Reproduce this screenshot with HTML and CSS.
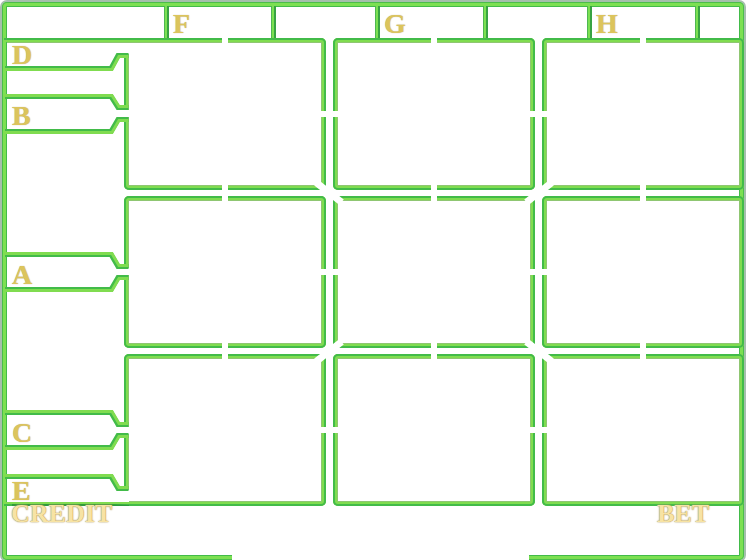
FILE: index.html
```html
<!DOCTYPE html>
<html lang="en">
<head>
<meta charset="utf-8">
<meta name="viewport" content="width=device-width, initial-scale=1">
<title>Reels</title>
<link rel="stylesheet" href="styles.css">
</head>
<body>
<main class="cabinet">
  <header class="top">
    <div class="slot"></div>
    <div class="slot divided letter">F</div>
    <div class="slot divided"></div>
    <div class="slot divided letter">G</div>
    <div class="slot divided"></div>
    <div class="slot divided letter">H</div>
    <div class="slot divided"></div>
  </header>
  <section class="field">
    <div class="rail">
      <svg class="pipes" viewBox="2 38 127 468" preserveAspectRatio="none" aria-hidden="true">
        <path class="clear" d="M124 42h5v12h-5zM124 490h5v12h-5z"/>
        <path class="clear" d="M124 110h5v7h-5zM124 268h5v7h-5zM124 427h5v7h-5z"/>
        <g class="edge">
          <path d="M5 68.5H111L118 55.5H128.5"/>
          <path d="M5 96.5H111L118 107.5H128.5"/>
          <path d="M5 131.5H111L118 119.5H128.5"/>
          <path d="M5 254.500H111L118 266.5H128.5"/>
          <path d="M5 289.5H111L118 277.5H128.5"/>
          <path d="M5 412.5H111L118 424.5H128.5"/>
          <path d="M5 447.5H111L118 435.5H128.5"/>
          <path d="M5 476.5H111L118 488.5H128.5"/>
        </g>
        <g class="shine">
          <path d="M4 69.5H112L119 56.5H128.5"/>
          <path d="M4 95.5H112L119 106.5H128.5"/>
          <path d="M4 132.5H112L119 120.5H128.5"/>
          <path d="M4 253.5H112L119 265.5H128.5"/>
          <path d="M4 290.5H112L119 278.5H128.5"/>
          <path d="M4 411.5H112L119 423.5H128.5"/>
          <path d="M4 448.5H112L119 436.5H128.5"/>
          <path d="M4 475.5H112L119 487.5H128.5"/>
        </g>
        <path class="dark" d="M4 38H129V40H4zM4 504H129V506H4z"/>
        <path class="light" d="M4 40H129V42H4zM4 502H129V504H4z"/>
        <path class="rim" d="M7 42H129V43H7z"/>
        <path class="shade" d="M12 504H110L129 505V506H12z"/>
      </svg>
      <span class="letter row-d">D</span>
      <span class="letter row-b">B</span>
      <span class="letter row-a">A</span>
      <span class="letter row-c">C</span>
      <span class="letter row-e">E</span>
    </div>
    <div class="reels">
      <div class="cell"></div>
      <div class="cell"></div>
      <div class="cell edge-right"></div>
      <div class="cell"></div>
      <div class="cell centre"><i class="cut nw"></i><i class="cut ne"></i><i class="cut sw"></i><i class="cut se"></i></div>
      <div class="cell edge-right"></div>
      <div class="cell edge-bottom"></div>
      <div class="cell edge-bottom"></div>
      <div class="cell edge-right edge-bottom"></div>
    </div>
  </section>
  <footer class="meters">
    <span class="meter">CREDIT</span>
    <span class="meter">BET</span>
  </footer>
</main>
</body>
</html>
```
FILE: styles.css
```css
:root {
  --dark: #42bb49;
  --light: #80dc50;
  --rim: #8fc672;
  --gold: #dcc45c;
  --cream: #f7e3a4;
}

* { box-sizing: border-box; }

body {
  margin: 0;
  background: #fff;
  font-family: "Liberation Serif", "Times New Roman", serif;
  font-weight: bold;
  overflow-x: hidden;
}

.cabinet {
  position: relative;
  display: grid;
  grid-template-rows: 36px minmax(300px, 1fr) 54px;
  min-height: calc(100vh - 2px);
  margin: 2px 2px 0;
  border-radius: 5px;
  box-shadow:
    inset 0 0 0 1px #4bbd4b,
    inset 0 0 0 4px #7ce052,
    inset 0 0 0 5px var(--dark),
    0 0 0 2px #a5bfac;
}

.top {
  display: grid;
  grid-template-columns: 157fr 107fr 104fr 108fr 104fr 108fr 44fr;
  padding: 4px 5px 0;
}

.slot { line-height: 35px; }

.divided {
  padding-left: 9px;
  background: linear-gradient(to right, #4eb751 0 1px, #7be052 1px 3px, #37a343 3px 5px) no-repeat left / 5px 100%;
}

.letter {
  color: var(--gold);
  font-size: 28px;
  text-shadow: 0 0 1px #b5aa80;
}

.field {
  display: grid;
  grid-template-columns: 122fr 620fr;
}

.rail {
  position: relative;
  z-index: 1;
  display: grid;
  grid-template-rows: 4fr 26fr 30fr 36fr 122fr 37fr 122fr 36fr 28fr 24fr 3fr;
  align-items: center;
  padding-left: 10px;
}

.rail .letter {
  position: relative;
  line-height: 24px;
}

.row-d { grid-row: 2; }
.row-b { grid-row: 4; }
.row-a { grid-row: 6; }
.row-c { grid-row: 8; }
.row-e { grid-row: 10; }

.pipes {
  position: absolute;
  top: 0;
  left: 0;
  width: calc(100% + 5px);
  height: 100%;
}

.pipes .clear { fill: #fff; }
.pipes .dark { fill: var(--dark); }
.pipes .light { fill: var(--light); }
.pipes .rim { fill: var(--rim); }
.pipes .shade { fill: #2f9a3b; }
.edge, .shine { fill: none; }
.edge { stroke: var(--dark); stroke-width: 5px; }
.shine { stroke: var(--light); stroke-width: 3px; }

.reels {
  display: grid;
  grid-template-columns: repeat(3, 1fr);
  grid-template-rows: repeat(3, 1fr);
  gap: 6px 7px;
}

.cell {
  --trim-x: 0px;
  --trim-y: 0px;
  position: relative;
  border-radius: 5px;
  box-shadow:
    inset 0 0 0 2px var(--dark),
    inset 0 0 0 4px var(--light),
    inset 0 0 0 5px var(--rim);
}

.cell::before {
  content: "";
  position: absolute;
  inset: 0;
  background:
    linear-gradient(#fff, #fff) no-repeat 0 50% / calc(100% - var(--trim-x)) 6px,
    linear-gradient(#fff, #fff) no-repeat 50% 0 / 6px calc(100% - var(--trim-y));
}

.edge-right { --trim-x: 5px; }
.edge-bottom { --trim-y: 5px; }

.centre { z-index: 1; }

.cut {
  position: absolute;
  width: 32px;
  height: 7px;
  background: #fff;
}

.nw { top: -7px; left: -20px; transform: rotate(38deg); }
.ne { top: -7px; right: -20px; transform: rotate(-38deg); }
.sw { bottom: -7px; left: -20px; transform: rotate(-38deg); }
.se { bottom: -7px; right: -20px; transform: rotate(38deg); }

.meters {
  position: relative;
  z-index: 2;
  display: flex;
  justify-content: space-between;
  align-items: flex-start;
  margin-top: -4px;
  padding: 0 35px 0 9px;
}

.meters::after {
  content: "";
  position: absolute;
  left: 31%;
  right: 29%;
  bottom: 0;
  height: 6px;
  background: #fff;
}

.meter {
  color: var(--cream);
  font-size: 26px;
  line-height: 24px;
  text-shadow: 0 0 1px #927b43, 0 0 2px #c5b27a;
}
```
